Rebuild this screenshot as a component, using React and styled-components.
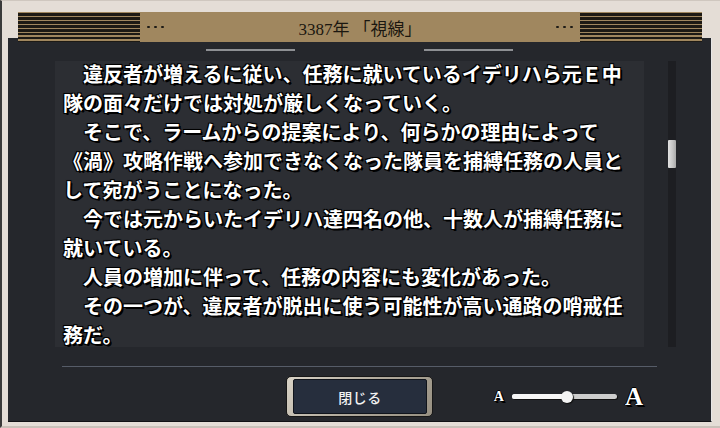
import React from "react";
import styled, { createGlobalStyle } from "styled-components";

const GlobalStyle = createGlobalStyle`
  html, body {
    margin: 0;
    padding: 0;
    background: #e4ddd6;
  }
  body {
    font-family: "Liberation Serif", "Noto Sans CJK JP", serif;
  }
`;

const Frame = styled.div`
  width: 720px;
  height: 428px;
  box-sizing: border-box;
  background: #e4ddd6;
  border-left: 2px solid #3a3a3a;
  border-top: 1px solid #cfc7bf;
  border-bottom: 2px solid #c9c1b9;
  padding: 11px 8px 4px 6px;
  overflow: hidden;
`;

const Header = styled.div`
  position: relative;
  z-index: 1;
  height: 30px;
  margin: 0 10px;
  display: flex;
  align-items: center;
  background: #a0875f;
`;

const Stripes = styled.div`
  width: 122px;
  align-self: stretch;
  background: repeating-linear-gradient(
    to bottom,
    #a0875f 0 1.4px,
    #1d1a15 1.4px 3.9px
  );
`;

const Dots = styled.div`
  display: flex;
  gap: 4.5px;
  margin: 0 7px;
`;

const Dot = styled.span`
  width: 2.6px;
  height: 2.6px;
  border-radius: 50%;
  background: #1d1a15;
`;

const Title = styled.div`
  flex: 1;
  text-align: center;
  font-size: 17px;
  color: #1b1710;
`;

const Panel = styled.div`
  margin-top: -4px;
  height: 384px;
  box-sizing: border-box;
  background: #25272c;
  border-right: 1px solid #e6e6e6;
  border-bottom: 1px solid #111215;
  padding-top: 11px;
  display: flex;
  flex-direction: column;
`;

const TabMarks = styled.div`
  display: flex;
  justify-content: center;
  gap: 129px;
`;

const Mark = styled.span`
  width: 89px;
  height: 2px;
  background: #8e9094;
`;

const Body = styled.div`
  display: flex;
  margin-top: 10px;
  height: 286px;
  padding-left: 47px;
`;

const TextArea = styled.div`
  width: 589px;
  box-sizing: border-box;
  padding-left: 8px;
  background: #2c2e33;
`;

const Story = styled.div`
  margin-top: -2px;
  font-family: "Noto Sans CJK JP", "Liberation Serif", serif;
  font-size: 20px;
  line-height: 29px;
  font-weight: 700;
  color: #ffffff;
  white-space: nowrap;
  text-shadow: 2px 2px 0 #000, 1px 1px 0 #000, -1px -1px 0 #000,
    1px -1px 0 #000, -1px 1px 0 #000, 0 0 2px #000;
`;

const Para = styled.p`
  margin: 0;
  text-indent: 1em;
`;

const ScrollTrack = styled.div`
  margin-left: 24px;
  width: 8px;
  background: #1d1e22;
`;

const Thumb = styled.div`
  margin-top: 79px;
  height: 28px;
  background: linear-gradient(to right, #e2e2e2, #c4c4c4 60%, #a9a9a9);
  border-radius: 1px;
`;

const Divider = styled.div`
  margin: 19px 54px 0;
  height: 1px;
  background: #565c68;
`;

const Footer = styled.div`
  margin-top: 9px;
  height: 41px;
  display: grid;
  grid-template-columns: 1fr auto 1fr;
  align-items: center;
`;

const CloseButton = styled.button`
  grid-column: 2;
  width: 147px;
  height: 41px;
  box-sizing: border-box;
  padding: 2px 5px 2px 6px;
  display: flex;
  border: 1px solid #171717;
  border-radius: 5px;
  background: linear-gradient(135deg, #d8d2c6, #b2ab9d 50%, #979082);
  cursor: pointer;
`;

const ButtonFace = styled.span`
  flex: 1;
  display: flex;
  align-items: center;
  justify-content: center;
  background: #262e3d;
  border: 1px solid #10141b;
  border-radius: 2px;
  color: #f2f2f2;
  font-family: "Noto Sans CJK JP", serif;
  font-size: 14px;
  font-weight: 500;
  letter-spacing: 0.5px;
`;

const SizeControl = styled.div`
  grid-column: 3;
  justify-self: end;
  margin-right: 68px;
  display: flex;
  align-items: center;
  gap: 8px;
`;

const Letter = styled.span`
  font-family: "Liberation Serif", serif;
  font-weight: 700;
  font-size: ${(p) => (p.$big ? 25 : 14)}px;
  line-height: 1;
  color: #ffffff;
  text-shadow: 1px 1px 0 #000, 2px 2px 0 #000, -1px 0 0 #000, 0 -1px 0 #000;
`;

const Track = styled.div`
  position: relative;
  width: 105px;
  height: 5px;
  border-radius: 3px;
  background: #cdcdcd;
  box-shadow: 1px 1px 0 #111;
`;

const Fill = styled.div`
  height: 100%;
  border-radius: 3px;
  background: #f7f7f7;
`;

const Knob = styled.div`
  position: absolute;
  top: 50%;
  width: 12px;
  height: 12px;
  border-radius: 50%;
  background: #f4f4f4;
  transform: translate(-50%, -50%);
  box-shadow: 1px 1px 1px #111;
`;

const lines = [
  ["違反者が増えるに従い、任務に就いているイデリハら元Ｅ中", "隊の面々だけでは対処が厳しくなっていく。"],
  [
    "そこで、ラームからの提案により、何らかの理由によって",
    "《渦》攻略作戦へ参加できなくなった隊員を捕縛任務の人員と",
    "して宛がうことになった。",
  ],
  ["今では元からいたイデリハ達四名の他、十数人が捕縛任務に", "就いている。"],
  ["人員の増加に伴って、任務の内容にも変化があった。"],
  ["その一つが、違反者が脱出に使う可能性が高い通路の哨戒任", "務だ。"],
];

export default function App() {
  const level = 0.52;
  return (
    <>
      <GlobalStyle />
      <Frame>
        <Header>
          <Stripes />
          <Dots>
            <Dot />
            <Dot />
            <Dot />
          </Dots>
          <Title>3387年 「視線」</Title>
          <Dots>
            <Dot />
            <Dot />
            <Dot />
          </Dots>
          <Stripes />
        </Header>
        <Panel>
          <TabMarks>
            <Mark />
            <Mark />
          </TabMarks>
          <Body>
            <TextArea>
              <Story>
                {lines.map((para, i) => (
                  <Para key={i}>
                    {para.map((line, j) => (
                      <React.Fragment key={j}>
                        {j > 0 && <br />}
                        {line}
                      </React.Fragment>
                    ))}
                  </Para>
                ))}
              </Story>
            </TextArea>
            <ScrollTrack>
              <Thumb />
            </ScrollTrack>
          </Body>
          <Divider />
          <Footer>
            <CloseButton>
              <ButtonFace>閉じる</ButtonFace>
            </CloseButton>
            <SizeControl>
              <Letter>A</Letter>
              <Track>
                <Fill style={{ width: `${level * 100}%` }} />
                <Knob style={{ left: `${level * 100}%` }} />
              </Track>
              <Letter $big>A</Letter>
            </SizeControl>
          </Footer>
        </Panel>
      </Frame>
    </>
  );
}
